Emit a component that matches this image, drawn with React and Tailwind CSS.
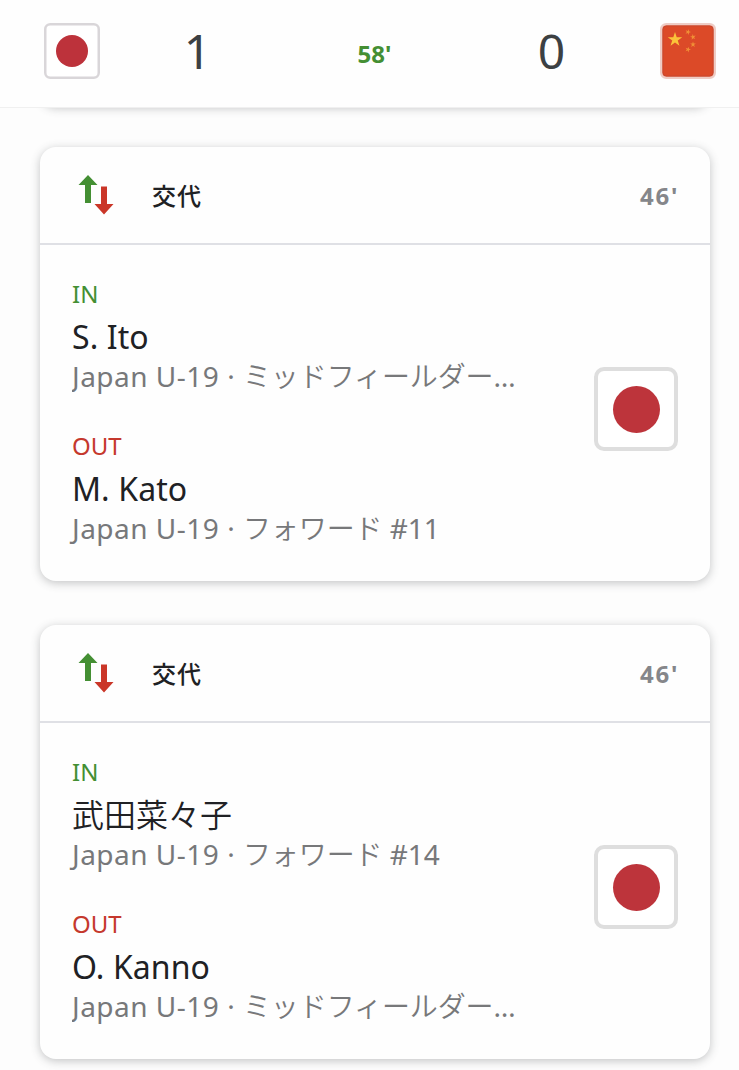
import React from 'react';

const substitutions = [
  {
    id: 1,
    minute: "46'",
    playerIn: { name: 'S. Ito', team: 'Japan U-19', position: 'ミッドフィールダー', rest: '…', clipped: true },
    playerOut: { name: 'M. Kato', team: 'Japan U-19', position: 'フォワード', rest: ' #11' },
  },
  {
    id: 2,
    minute: "46'",
    playerIn: { name: '武田菜々子', team: 'Japan U-19', position: 'フォワード', rest: ' #14', kanji: true },
    playerOut: { name: 'O. Kanno', team: 'Japan U-19', position: 'ミッドフィールダー', rest: '…', clipped: true },
  },
];

const JapanBadge = () => (
  <svg viewBox="0 0 56 56" className="w-14 h-14">
    <rect x="1.25" y="1.25" width="53.5" height="53.5" rx="5" fill="#fff" stroke="#d9d6d9" strokeWidth="2.5" />
    <circle cx="28" cy="28" r="16" fill="#bd323b" />
  </svg>
);

const STAR = '0,-1 .2245,-.309 .951,-.309 .363,.118 .588,.809 0,.382 -.588,.809 -.363,.118 -.951,-.309 -.2245,-.309';

const ChinaBadge = () => (
  <svg viewBox="0 0 56 56" className="w-14 h-14">
    <rect x="1.25" y="1.25" width="53.5" height="53.5" rx="5" fill="#dc4a28" stroke="#eeccc5" strokeWidth="2.5" />
    <rect x="3" y="3" width="50" height="50" rx="3.5" fill="none" stroke="#c7482f" strokeWidth="1" />
    <polygon points={STAR} fill="#fbc33a" transform="translate(15 16.5) scale(7.6)" />
    <polygon points={STAR} fill="#f09036" transform="translate(28 9) rotate(20) scale(3)" />
    <polygon points={STAR} fill="#f09036" transform="translate(33 14) rotate(-10) scale(3)" />
    <polygon points={STAR} fill="#f09036" transform="translate(33 21.5) scale(3)" />
    <polygon points={STAR} fill="#f09036" transform="translate(28 26.5) rotate(20) scale(3)" />
  </svg>
);

const SwapIcon = () => (
  <svg viewBox="0 0 36 40" className="w-9 h-10">
    <path d="M10 0 19.5 10H13V28H7V10H.5Z" fill="#448f33" />
    <path d="M23 11.5H29V29H35.5L26 39.5 16.5 29H23Z" fill="#ca3628" />
  </svg>
);

const Player = ({ label, color, player }) => (
  <div>
    <p className={`text-[24px] leading-8 mb-[7px] ${color}`}>{label}</p>
    <p className={`text-[32px] leading-10 text-[#202124] ${player.kanji ? 'font-[350]' : 'tracking-[0.1px]'}`}>{player.name}</p>
    <p className={`text-[28px] leading-[39px] text-[#77787a] whitespace-pre ${player.clipped ? 'overflow-hidden' : ''}`}>
      <span className="tracking-[0.5px]">{player.team} · </span>
      <span className="font-[350] tracking-[-0.1px]">{player.position}</span>
      <span>{player.rest}</span>
    </p>
  </div>
);

const SubstitutionCard = ({ sub }) => (
  <section className="bg-[#fefefe] rounded-2xl shadow-[0_2px_10px_rgba(60,64,67,0.3)]">
    <header className="h-[98px] flex items-center border-b-2 border-[#dfe0e5] pl-[38px] pr-[31px]">
      <SwapIcon />
      <h2 className="ml-[38px] pt-0.5 text-[24px] font-medium tracking-[1px] text-[#202124]">交代</h2>
      <span className="ml-auto pt-0.5 text-[24px] font-bold tracking-[1.7px] text-[#85868a]">{sub.minute}</span>
    </header>
    <div className="h-[336px] flex items-center justify-between px-8">
      <div className="flex flex-col gap-[34px]">
        <Player label="IN" color="text-[#448f33]" player={sub.playerIn} />
        <Player label="OUT" color="text-[#c5382d]" player={sub.playerOut} />
      </div>
      <div className="w-[84px] h-[84px] mb-2 rounded-[10px] border-4 border-[#dedede] bg-white flex items-center justify-center">
        <div className="w-[47px] h-[47px] rounded-full bg-[#bd343b]"></div>
      </div>
    </div>
  </section>
);

const App = () => (
  <div className="w-[739px] h-[1070px] overflow-hidden bg-[#fdfdfd] font-['Noto_Sans','Noto_Sans_CJK_JP',sans-serif]" lang="ja">
    <header className="relative z-10 h-[108px] bg-[#fefefe] border-b border-[#f0f0f0] pt-[23px] pl-11 pr-[23px] flex items-start">
      <JapanBadge />
      <span className="w-[195px] h-14 flex items-center justify-center text-[48px] text-[#3c4043]">1</span>
      <span className="w-[159px] h-14 pt-1.5 flex items-center justify-center text-[24px] font-bold text-[#448f33]">58'</span>
      <span className="w-[195px] h-14 flex items-center justify-center text-[48px] text-[#3c4043]">0</span>
      <div className="ml-auto"><ChinaBadge /></div>
    </header>

    {/* bottom edge of the card scrolled under the score bar */}
    <div className="ml-10 mr-[29px] -mt-5 h-[18px] rounded-b-2xl bg-[#fefefe] shadow-[0_2px_10px_rgba(60,64,67,0.3)]"></div>

    <main className="mt-[41px] pl-10 pr-[29px] flex flex-col gap-11">
      {substitutions.map((sub) => (
        <SubstitutionCard key={sub.id} sub={sub} />
      ))}
    </main>
  </div>
);

export default App;
